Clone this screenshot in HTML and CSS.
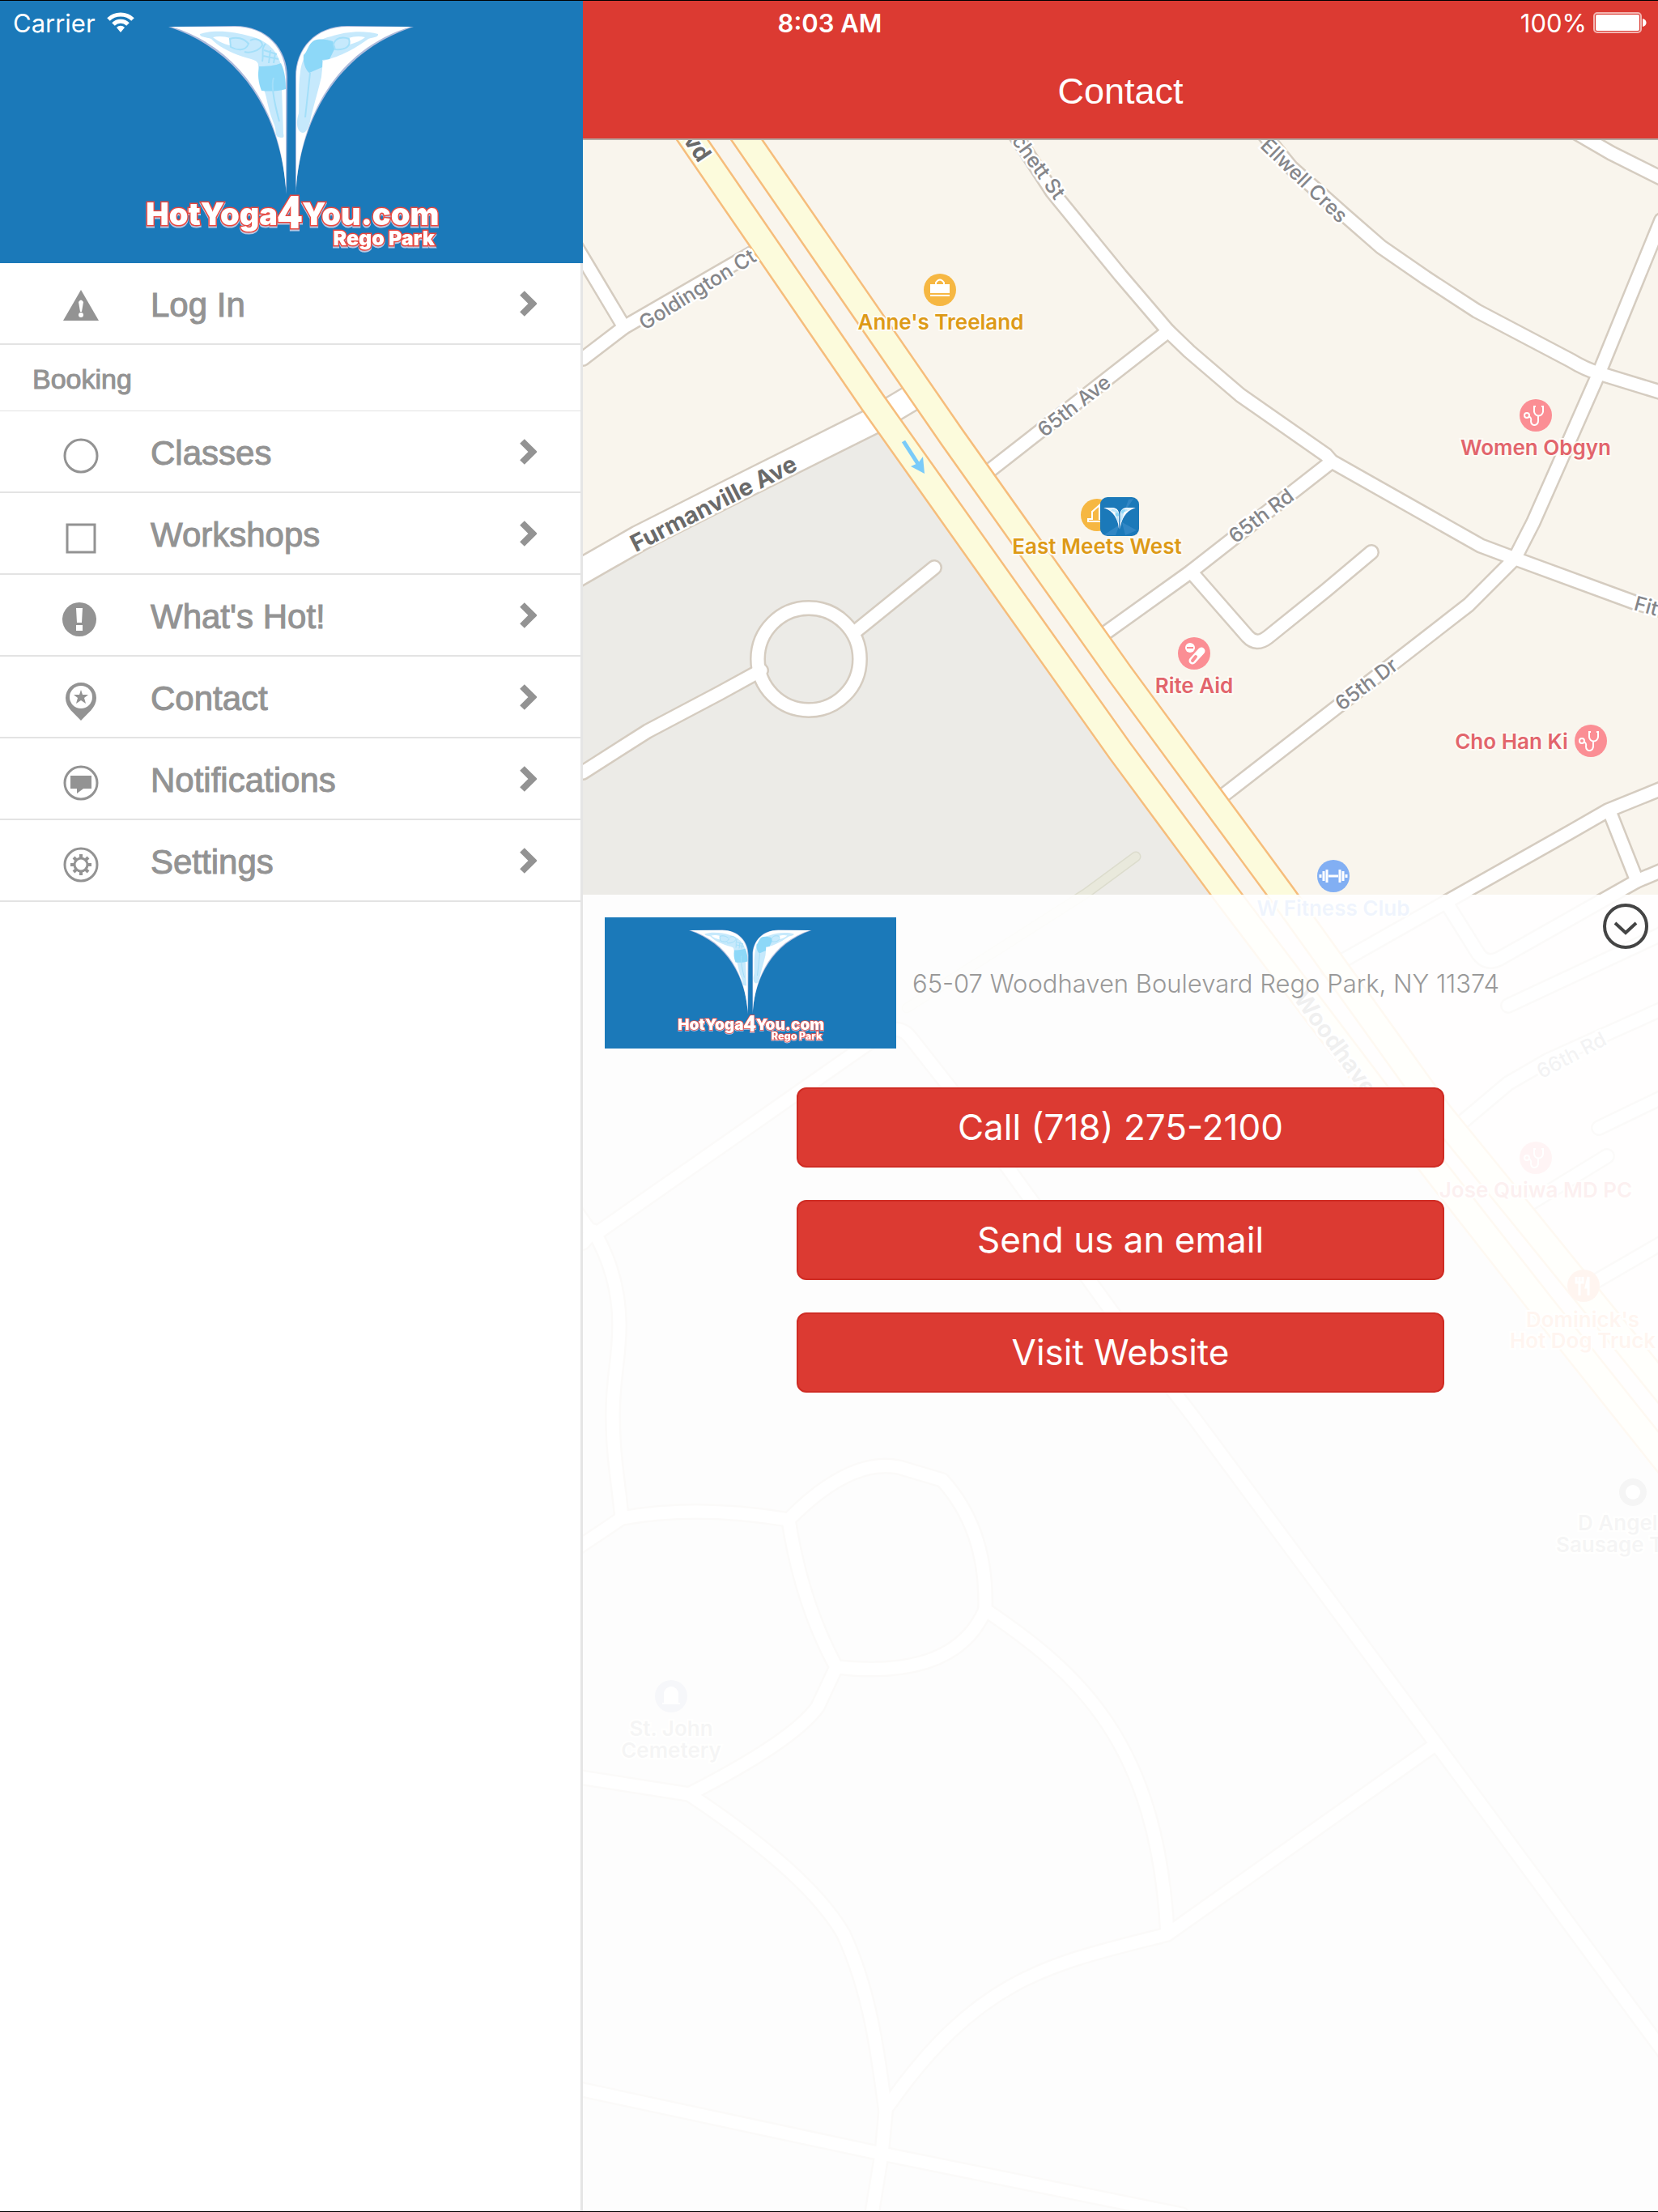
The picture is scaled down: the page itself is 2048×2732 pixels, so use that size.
FILE: index.html
```
<!DOCTYPE html>
<html lang="en">
<head>
    <meta charset="UTF-8">
    <meta name="viewport" content="width=device-width, initial-scale=1.0">
    <title>Contact</title>
    <link rel="stylesheet" href="styles.css">
</head>
<body>
    <!-- Shared shapes -->
    <svg class="defs" width="0" height="0" aria-hidden="true">
        <symbol id="logo-mark" viewBox="200 28 320 214">
            <g class="leaf-edge">
                <path d="M208 33 L290 32 C330 32 355 60 355 95 L354 240 C348 150 305 65 208 33 Z"/>
                <path d="M511 33 L429 32 C389 32 365 60 365 95 L365 240 C371 150 414 65 511 33 Z"/>
            </g>
            <g class="leaf">
                <path d="M212 33 L290 33 C329 33 353 60 353 95 L353 232 C347 146 305 62 212 33 Z"/>
                <path d="M507 33 L429 33 C390 33 366 60 366 95 L366 232 C372 146 414 62 507 33 Z"/>
            </g>
            <g class="body-light">
                <path d="M247 42 C265 36 290 39 310 45 C330 50 343 63 347 80 L350 165 C352 172 347 170 343 169 C339 166 342 160 338 152 C330 132 330 120 326 111 L319 82 C320 74 312 74 300 70 C282 64 268 56 261 48 C256 46 246 46 247 42 Z"/>
                <path d="M467 42 C450 37 425 39 409 45 C385 50 374 68 371 88 C368 110 370 125 369 140 C365 152 367 163 374 164 C380 164 383 152 384 145 C389 125 393 112 397 95 L399 75 C412 72 430 66 455 48 C461 46 468 46 467 42 Z"/>
            </g>
            <g class="leaf">
                <path d="M263 46 C270 44 278 45 284 47 L284 56 C275 54 268 50 263 46 Z"/>
                <path d="M451 46 C444 44 436 45 431 47 L431 55 C440 53 446 50 451 46 Z"/>
            </g>
            <g class="body-dark">
                <path d="M320 82 C330 82 340 81 347 78 C352 88 353 100 353 110 C343 113 332 113 323 112 C319 102 318 92 320 82 Z"/>
                <path d="M388 50 C396 47 404 49 411 51 L414 59 L407 73 L398 74 L398 83 L382 90 C377 86 374 76 375 68 C380 64 380 55 388 50 Z"/>
            </g>
            <g class="body-line">
                <path d="M284 48 C292 45 301 47 307 54 C303 64 292 62 285 58 Z M412 55 C414 46 424 45 431 48 C434 57 427 62 414 61 Z"/>
                <path d="M309 50 C316 46 324 50 324 56 C320 63 308 66 302 64 M328 54 C322 60 326 66 324 76 M334 62 L332 78 M340 66 L338 78 M326 62 L342 67 M325 69 L344 73"/>
                <path d="M338 96 C334 106 341 135 345 150 M383 90 C381 108 379 128 377 145"/>
            </g>
        </symbol>
        <symbol id="chevron" viewBox="0 0 22 34">
            <path d="M4 4 L17 17 L4 30" fill="none" stroke="#939393" stroke-width="8"/>
        </symbol>
        <symbol id="stethoscope" viewBox="-20 -20 40 40">
            <g fill="none" stroke="#fff" stroke-width="2">
                <path d="M0 -11 H-2 V-5 A5 5 0 0 0 9 -5 V-11 H7 M3 1 V5 C4 14 -6 14 -6 7 C-5 3 -7 2 -9 1"/>
                <circle cx="-11" cy="0" r="3"/>
            </g>
        </symbol>
    </svg>

    <div class="app">
        <div class="status-bar">
            <span class="status-left">Carrier
                <svg width="34" height="26" viewBox="0 0 34 26" aria-hidden="true">
                    <g fill="none" stroke="#fff" stroke-width="5">
                        <path d="M2 9 C10 1 24 1 32 9"/>
                        <path d="M8 15 C13 10 21 10 26 15"/>
                    </g>
                    <path d="M12 19 C15 16 19 16 22 19 L17 25 Z" fill="#fff"/>
                </svg>
            </span>
            <span class="status-time">8:03 AM</span>
            <span class="status-right">100%
                <svg width="66" height="26" viewBox="0 0 66 26" aria-hidden="true">
                    <rect x="1" y="1" width="58" height="24" rx="4" fill="none" stroke="#f3b5b1" stroke-width="2"/>
                    <rect x="3" y="3" width="54" height="20" rx="2" fill="#fff"/>
                    <path d="M61 8 C67 9 67 17 61 18 Z" fill="#fff"/>
                </svg>
            </span>
        </div>

        <!-- Side menu -->
        <aside class="sidebar">
            <svg class="brand" viewBox="0 0 720 324" role="img" aria-label="HotYoga4You.com Rego Park">
                <g id="logo">
                    <use href="#logo-mark" x="200" y="27" width="320" height="214"/>
                    <g class="logo-text">
                        <text x="343" y="277" text-anchor="end">HotYoga</text>
                        <text x="373" y="277">You.com</text>
                        <text x="358" y="281" text-anchor="middle" class="logo-four">4</text>
                        <text x="537" y="302" text-anchor="end" class="logo-small">Rego Park</text>
                    </g>
                </g>
            </svg>
            <nav class="menu">
                <a class="menu-item" href="#login">
                    <svg class="icon" viewBox="0 0 60 60">
                        <path d="M30 13 L52 51 H8 Z" fill="#939393"/>
                        <path d="M27 28 Q30 23 33 28 L31 40 H29 Z" fill="#fff"/>
                        <circle cx="30" cy="44" r="3" fill="#fff"/>
                    </svg>
                    <span>Log In</span>
                    <svg class="arrow"><use href="#chevron"/></svg>
                </a>
                <h2 class="menu-heading">Booking</h2>
                <a class="menu-item" href="#classes">
                    <svg class="icon" viewBox="0 0 60 60"><circle class="line" cx="30" cy="35" r="20"/></svg>
                    <span>Classes</span>
                    <svg class="arrow"><use href="#chevron"/></svg>
                </a>
                <a class="menu-item" href="#workshops">
                    <svg class="icon" viewBox="0 0 60 60"><rect class="line" x="13" y="19" width="34" height="34"/></svg>
                    <span>Workshops</span>
                    <svg class="arrow"><use href="#chevron"/></svg>
                </a>
                <a class="menu-item" href="#hot">
                    <svg class="icon" viewBox="0 0 60 60">
                        <circle cx="28" cy="35" r="21" fill="#939393"/>
                        <path d="M24 21 H32 L31 39 H25 Z M24 42 H32 V49 H24 Z" fill="#fff"/>
                    </svg>
                    <span>What's Hot!</span>
                    <svg class="arrow"><use href="#chevron"/></svg>
                </a>
                <a class="menu-item" href="#contact">
                    <svg class="icon" viewBox="0 0 60 60">
                        <path d="M30 12 A19 19 0 0 1 49 31 C49 43 38 50 30 59 C22 50 11 43 11 31 A19 19 0 0 1 30 12 Z" fill="#939393"/>
                        <circle cx="30" cy="30" r="14" fill="#fff"/>
                        <path d="M30 21 L32 27 L39 27 L34 31 L36 38 L30 34 L24 38 L26 31 L21 27 L28 27 Z" fill="#939393"/>
                    </svg>
                    <span>Contact</span>
                    <svg class="arrow"><use href="#chevron"/></svg>
                </a>
                <a class="menu-item" href="#notifications">
                    <svg class="icon" viewBox="0 0 60 60">
                        <circle class="line" cx="30" cy="35" r="20"/>
                        <path d="M17 26 H43 V42 H33 L25 48 V42 H17 Z" fill="#939393"/>
                    </svg>
                    <span>Notifications</span>
                    <svg class="arrow"><use href="#chevron"/></svg>
                </a>
                <a class="menu-item" href="#settings">
                    <svg class="icon" viewBox="0 0 60 60">
                        <circle class="line" cx="30" cy="35" r="20"/>
                        <circle class="line" cx="30" cy="35" r="8"/>
                        <path class="line gear" d="M30 27 V22 M30 43 V48 M22 35 H17 M38 35 H43 M24 29 L21 26 M36 29 L39 26 M24 41 L21 44 M36 41 L39 44"/>
                    </svg>
                    <span>Settings</span>
                    <svg class="arrow"><use href="#chevron"/></svg>
                </a>
            </nav>
        </aside>

        <!-- Contact page -->
        <main class="page">
            <header class="nav-bar">
                <h1>Contact</h1>
            </header>
            <div class="map-area">
                <svg class="map" viewBox="720 173 1328 2558" preserveAspectRatio="xMinYMin slice">
                    <defs>
                        <g id="streets">
                            <path d="M720 443 L771 404 L932 311"/>
                            <path d="M700 285 L771 404"/>
                            <path d="M1240 145 L1300 237 L1384 340 L1443 409 L1469 434 L1532 488 L1638 562 L1645 570 L1829 674 L1869 689 L2019 744 L2060 756"/>
                            <path d="M1443 409 L1215 587"/>
                            <path d="M1645 570 L1471 706 L1358 787"/>
                            <path d="M1471 706 L1541 786 Q1552 798 1566 787 L1638 729 L1694 682"/>
                            <path d="M1871 690 L1814 747 L1505 987"/>
                            <path d="M2052 272 L1975 461 L1939 543 L1894 645 L1872 688"/>
                            <path d="M1540 140 L1595 207 L1659 264 L1706 305 L1761 343 L1824 384 L1940 445 Q1958 456 1975 461 L2060 487"/>
                            <path d="M1940 160 L1990 189 L2060 224"/>
                            <path d="M2060 971 L1986 1001 L1939 1028 L1790 1112 L1640 1197"/>
                            <path d="M1988 1002 L2022 1088"/>
                            <path d="M2060 1072 L2022 1088 L1852 1184 Q1836 1192 1826 1178 L1786 1114"/>
                            <path d="M1863 1242 L2060 1150"/>
                            <path d="M1800 1391 L1863 1338 L1913 1309 L2060 1243"/>
                            <path d="M1975 1393 L2060 1352"/>
                            <path d="M1985 1428 L1892 1485"/>
                            <path d="M1965 1586 L2060 1531"/>
                            <path d="M720 954 L800 903 L889 856 L940 828"/>
                            <path d="M1059 778 L1154 701"/>
                            <circle cx="999" cy="814" r="63"/>
                            <path d="M700 1480 L733 1526 L1085 1280 Q1110 1262 1125 1282 L1173 1343 L1372 1618 L1474 1750 L1774 2154 L2060 2541"/>
                            <path d="M720 1535 L733 1520 Q765 1575 765 1636 C765 1680 757 1700 757 1747 C757 1800 764 1830 768 1875"/>
                            <path d="M710 1914 L768 1875 Q860 1858 974 1877 Q1050 1800 1110 1812 L1164 1828 Q1220 1890 1217 1988 Q1180 2075 1033 2059 Q990 1980 974 1877"/>
                            <path d="M1033 2059 L1010 2108 Q980 2150 851 2216 L710 2194"/>
                            <path d="M851 2216 Q1000 2315 1042 2389 C1075 2460 1085 2540 1094 2608 L1089 2661 L1076 2740"/>
                            <path d="M1217 1988 C1330 2065 1430 2150 1442 2389 L1774 2154"/>
                            <path d="M1442 2389 C1300 2425 1210 2440 1097 2601"/>
                            <path d="M710 2579 L1089 2660 L1460 2735"/>
                        </g>
                        <path id="blvd-west" d="M830 136 L1078 497 L1384 928 L1515 1105 L1772 1444 L1906 1615 L2060 1808"/>
                        <path id="blvd-east" d="M897 136 L1176 540 L1384 833 L1584 1105 L1778 1375 L1875 1494 L2060 1722"/>
                        <path id="furmanville" d="M700 716 L789 665 L900 609 L1078 520 L1135 486"/>
                    </defs>

                    <rect x="720" y="171" width="1328" height="2560" fill="#f9f5ed"/>
                    <path d="M720 705 L1078 520 L1515 1105 L1772 1444 L1906 1615 L2060 1808 V2740 H720 Z" fill="#ecebe7"/>

                    <g class="trail">
                        <path d="M1403 1058 L1342 1103 L1120 1245" stroke="#dcdccd" stroke-width="13"/>
                        <path d="M1403 1058 L1342 1103 L1120 1245" stroke="#e9e9dc" stroke-width="10"/>
                    </g>

                    <g class="roads">
                        <use href="#streets" stroke="#d5ccc0" stroke-width="20"/>
                        <use href="#furmanville" stroke="#d5ccc0" stroke-width="35"/>
                        <use href="#streets" stroke="#fff" stroke-width="15"/>
                        <use href="#furmanville" stroke="#fff" stroke-width="30"/>
                        <use href="#blvd-west" stroke="#f6bd7c" stroke-width="34"/>
                        <use href="#blvd-east" stroke="#f6bd7c" stroke-width="34"/>
                        <use href="#blvd-west" stroke="#fcfbdc" stroke-width="29"/>
                        <use href="#blvd-east" stroke="#fcfbdc" stroke-width="29"/>
                    </g>
                    <path d="M1116 545 L1134 573" stroke="#7acbf9" stroke-width="5" fill="none"/>
                    <path d="M1142 585 L1125 576 L1134 572 L1140 564 Z" fill="#7acbf9"/>

                    <g class="street-name">
                        <text transform="translate(863 202) rotate(56)" text-anchor="end" class="major">Blvd</text>
                        <text transform="translate(866 365) rotate(-32)">Goldington Ct</text>
                        <text transform="translate(1276 211) rotate(54)">chett St</text>
                        <text transform="translate(1332 508) rotate(-38)">65th Ave</text>
                        <text transform="translate(1605 229) rotate(44)">Ellwell Cres</text>
                        <text transform="translate(1563 644) rotate(-37)">65th Rd</text>
                        <text transform="translate(1693 852) rotate(-37)">65th Dr</text>
                        <text transform="translate(2017 753) rotate(15)" class="from-left">Fit</text>
                        <text transform="translate(886 631) rotate(-27)" class="major">Furmanville Ave</text>
                        <text transform="translate(1597 1233) rotate(54)" class="major from-left">Woodhaven</text>
                        <text transform="translate(1945 1311) rotate(-28)">66th Rd</text>
                    </g>

                    <!-- Places -->
                    <g class="place shop">
                        <circle cx="1161" cy="358" r="20"/>
                        <path d="M1149 351 H1173 V362 H1149 Z M1149 364 H1173 V366 H1149 Z" fill="#fff"/>
                        <path d="M1156 351 V349 Q1161 342 1166 349 V351" fill="none" stroke="#fff" stroke-width="2"/>
                        <text x="1162" y="407">Anne's Treeland</text>
                    </g>
                    <g class="place shop">
                        <circle cx="1355" cy="636" r="20"/>
                        <path d="M1344 644 H1362 V641 H1358 V624 L1349 632 V641 H1344 Z" fill="none" stroke="#fff" stroke-width="2"/>
                        <text x="1355" y="684">East Meets West</text>
                    </g>
                    <g class="pin">
                        <rect x="1359" y="614" width="48" height="48" rx="9" fill="#1b79b9"/>
                        <path d="M1363 661 L1383 648 L1378 661 Z M1390 661 L1386 645 L1404 655 Z M1394 617 L1388 634 L1400 616 Z" fill="#3186c4"/>
                        <use href="#logo-mark" x="1362" y="626" width="42" height="29"/>
                    </g>
                    <g class="place health">
                        <circle cx="1897" cy="513" r="20"/>
                        <use href="#stethoscope" x="1877" y="493" width="40" height="40"/>
                        <text x="1897" y="562">Women Obgyn</text>
                        <circle cx="1475" cy="807" r="20"/>
                        <circle cx="1470" cy="800" r="6" fill="#fff"/>
                        <path d="M1466 800 H1474" stroke="#fb8e94" stroke-width="2"/>
                        <path d="M1473 816 L1484 804" stroke="#fff" stroke-width="9" stroke-linecap="round"/>
                        <path d="M1473 816 L1477 811" stroke="#fb8e94" stroke-width="4" stroke-linecap="round"/>
                        <text x="1475" y="856">Rite Aid</text>
                        <circle cx="1965" cy="915" r="20"/>
                        <use href="#stethoscope" x="1945" y="895" width="40" height="40"/>
                        <text x="1867" y="925">Cho Han Ki</text>
                        <circle cx="1897" cy="1430" r="20"/>
                        <use href="#stethoscope" x="1877" y="1410" width="40" height="40"/>
                        <text x="1897" y="1479">Jose Quiwa MD PC</text>
                    </g>
                    <g class="place fitness">
                        <circle cx="1647" cy="1082" r="20"/>
                        <path d="M1641 1082 H1653 M1639 1074 V1090 M1655 1074 V1090 M1635 1076 V1088 M1659 1076 V1088 M1631 1080 V1084 M1663 1080 V1084" stroke="#fff" stroke-width="3"/>
                        <text x="1647" y="1131">W Fitness Club</text>
                    </g>
                    <g class="place food">
                        <circle cx="1956" cy="1588" r="20"/>
                        <path d="M1951 1577 V1600 M1947 1577 V1584 H1955 V1577 M1962 1600 V1577 L1959 1590 H1962" stroke="#fff" stroke-width="3" fill="none"/>
                        <text x="1955" y="1639">Dominick's</text>
                        <text x="1955" y="1665">Hot Dog Truck</text>
                    </g>
                    <g class="place other">
                        <circle cx="2017" cy="1843" r="17"/>
                        <circle cx="2017" cy="1843" r="9" fill="#fff"/>
                        <text x="1949" y="1890" class="from-left">D Angel</text>
                        <text x="1922" y="1917" class="from-left">Sausage T</text>
                    </g>
                    <g class="place other">
                        <circle cx="829" cy="2095" r="20" fill="#a3a8cc"/>
                        <path d="M818 2104 H840 M821 2102 V2092 A8 8 0 0 1 837 2092 V2102 Z" stroke="#fff" stroke-width="2" fill="#fff"/>
                        <text x="829" y="2144">St. John</text>
                        <text x="829" y="2171">Cemetery</text>
                    </g>
                </svg>

                <section class="panel">
                    <button class="collapse" type="button" aria-label="Collapse">
                        <svg width="58" height="58" viewBox="0 0 58 58">
                            <g fill="none" stroke="#444" stroke-width="4">
                                <circle cx="29" cy="29" r="26"/>
                                <path d="M16 25 L29 37 L42 25"/>
                            </g>
                        </svg>
                    </button>
                    <div class="info">
                        <svg class="info-logo" viewBox="0 0 720 324" role="img" aria-label="HotYoga4You.com Rego Park"><use href="#logo"/></svg>
                        <p class="address">65-07 Woodhaven Boulevard Rego Park, NY 11374</p>
                    </div>
                    <div class="actions">
                        <a class="btn" href="tel:7182752100">Call (718) 275-2100</a>
                        <a class="btn" href="#email">Send us an email</a>
                        <a class="btn" href="#website">Visit Website</a>
                    </div>
                </section>
            </div>
        </main>
    </div>
</body>
</html>
```

FILE: styles.css
```
* {
    margin: 0;
    padding: 0;
    box-sizing: border-box;
}

body {
    font-family: "Liberation Sans", Arial, Helvetica, sans-serif;
    background-color: white;
}

a {
    text-decoration: none;
}

.defs {
    position: absolute;
}

.app {
    position: relative;
    display: grid;
    grid-template-columns: 720px 1fr;
    min-height: 100vh;
    border-top: 1px solid black;
    border-bottom: 1px solid black;
}

/* Status bar, over both columns */
.status-bar {
    position: absolute;
    top: 0;
    left: 0;
    right: 0;
    display: grid;
    grid-template-columns: 1fr auto 1fr;
    align-items: center;
    height: 54px;
    padding: 0 14px 0 16px;
    color: white;
    font-family: Inter, sans-serif;
    font-size: 31px;
}

.status-left, .status-right {
    display: flex;
    align-items: center;
    gap: 14px;
}

.status-right {
    justify-content: flex-end;
    gap: 8px;
}

.status-time {
    font-weight: 600;
}

/* Side menu */
.sidebar {
    border-right: 3px solid #e5e5e5;
}

.brand {
    display: block;
    width: 720px;
    height: 324px;
    background-color: #1b79b9;
}

.menu-item {
    display: flex;
    align-items: center;
    height: 101px;
    padding: 0 54px 0 70px;
    border-bottom: 2px solid #e3e3e3;
    color: #939393;
    font-size: 42px;
    -webkit-text-stroke: 1px #939393;
}

.menu-item span {
    flex: 1;
    padding: 4px 0 0 56px;
}

.menu-heading {
    height: 82px;
    padding-left: 40px;
    border-bottom: 1px solid #e3e3e3;
    color: #939393;
    font-size: 34px;
    font-weight: normal;
    line-height: 84px;
    -webkit-text-stroke: 1px #939393;
}

.icon {
    width: 60px;
    height: 60px;
}

.arrow {
    width: 22px;
    height: 34px;
}

.line {
    fill: none;
    stroke: #939393;
    stroke-width: 3;
}

.gear {
    stroke-width: 4;
}

/* Logo */
.leaf {
    fill: white;
}

.leaf-edge {
    fill: #aebbdc;
}

.body-light {
    fill: #c6e9fc;
}

.body-dark {
    fill: #8dd8f8;
}

.body-line {
    fill: none;
    stroke: #a3dff9;
    stroke-width: 2;
}

.logo-text {
    fill: white;
    stroke: #e8473f;
    stroke-width: 3;
    paint-order: stroke;
    font-family: Inter, sans-serif;
    font-size: 38px;
    font-weight: 900;
    filter: drop-shadow(0 2px 0 #b9c6e2);
}

.logo-four {
    font-family: Roboto, sans-serif;
    font-size: 56px;
}

.logo-small {
    font-size: 25px;
}

/* Contact page */
.page {
    display: flex;
    flex-direction: column;
}

.nav-bar {
    height: 172px;
    padding-top: 54px;
    background-color: #dc3a32;
    border-bottom: 2px solid #b3a8a2;
    color: white;
    text-align: center;
}

.nav-bar h1 {
    font-size: 45px;
    font-weight: normal;
    line-height: 116px;
}

.map-area {
    position: relative;
    flex: 1;
    display: grid;
    grid-template-rows: 466fr 813fr;
    overflow: hidden;
}

.map {
    position: absolute;
    width: 100%;
    height: 100%;
}

.roads, .trail {
    fill: none;
    stroke-linecap: round;
    stroke-linejoin: round;
}

.street-name {
    fill: #85868a;
    stroke: white;
    stroke-width: 5;
    paint-order: stroke;
    font-family: Inter, sans-serif;
    font-size: 25px;
    font-weight: 500;
    text-anchor: middle;
}

.street-name .major {
    fill: #6a6a6a;
    font-size: 29px;
    font-weight: 700;
}

.place {
    stroke: none;
    font-family: Inter, sans-serif;
    font-size: 26px;
    font-weight: 600;
    text-anchor: middle;
}

.place text {
    stroke: #fdfbf5;
    stroke-width: 4;
    paint-order: stroke;
}

.street-name .from-left, .place .from-left {
    text-anchor: start;
}

.shop {
    fill: #f6b742;
}

.shop text {
    fill: #dd9a17;
}

.health {
    fill: #fb8e94;
}

.health text {
    fill: #e2656c;
}

.fitness {
    fill: #82aff3;
}

.fitness text {
    fill: #5b93ea;
}

.food {
    fill: #fb9c66;
}

.other {
    fill: #999;
}

/* Panel over the map */
.panel {
    position: relative;
    grid-row: 2;
    padding-top: 28px;
    background-color: rgba(255, 255, 255, 0.9);
}

.collapse {
    position: absolute;
    top: 10px;
    right: 11px;
    width: 58px;
    height: 58px;
    background: none;
    border: none;
}

.info {
    display: flex;
    align-items: center;
    gap: 20px;
    padding-left: 27px;
}

.info-logo {
    width: 360px;
    height: 162px;
    background-color: #1b79b9;
}

.address {
    color: #999;
    font-family: Inter, sans-serif;
    font-size: 31px;
    font-weight: 300;
}

.actions {
    display: flex;
    flex-direction: column;
    align-items: center;
    gap: 40px;
    padding-top: 48px;
}

.btn {
    width: 800px;
    background-color: #dc3a32;
    border: 2px solid #cf2c24;
    border-radius: 12px;
    color: white;
    font-family: Inter, sans-serif;
    font-size: 44px;
    line-height: 95px;
    text-align: center;
}
```
